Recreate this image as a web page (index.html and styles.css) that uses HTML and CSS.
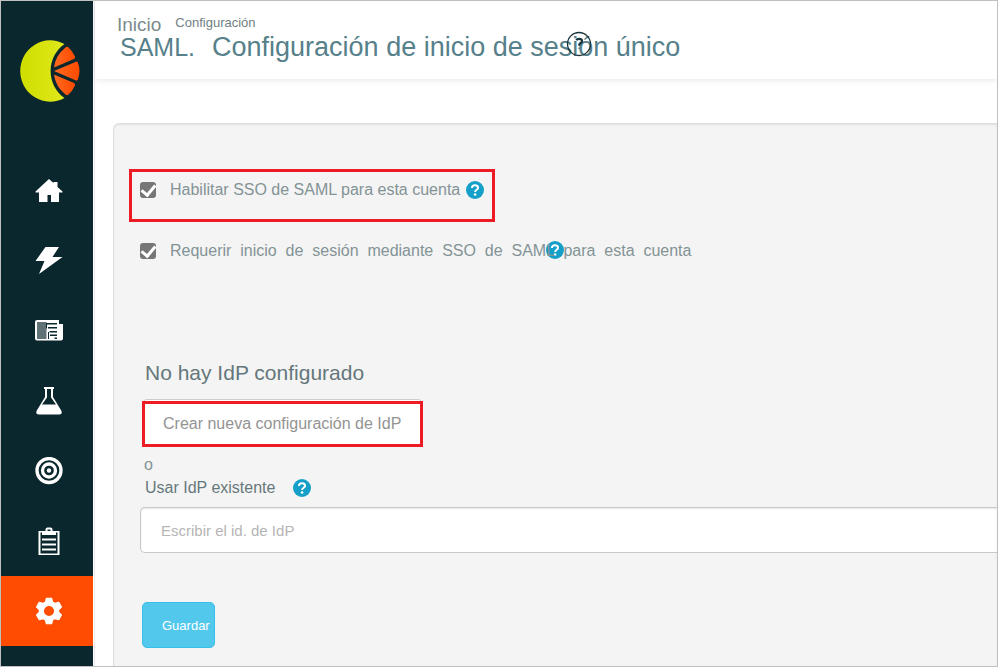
FILE: index.html
```html
<!DOCTYPE html>
<html lang="es">
<head>
<meta charset="utf-8">
<meta name="viewport" content="width=device-width, initial-scale=1">
<title>Configuración de inicio de sesión único</title>
<link rel="stylesheet" href="styles.css">
</head>
<body>
<svg class="defs" aria-hidden="true">
  <symbol id="help" viewBox="0 0 18 18">
    <circle cx="9" cy="9" r="9" fill="#169fc8"/>
    <path d="M6 6.900V6.500C6.200 4.900 7.400 4.200 9 4.200c1.800 0 3.100.9 3.100 2.500 0 2.200-3 2-3 4.300" fill="none" stroke="#fff" stroke-width="2"/>
    <circle cx="9.100" cy="13.500" r="1.300" fill="#fff"/>
  </symbol>
</svg>
<div class="app">
  <nav class="sidebar" aria-label="Principal">
    <a class="logo" href="#" aria-label="Portada">
      <svg width="60" height="62" viewBox="0 0 60 62">
        <defs>
          <linearGradient id="lime"><stop offset="0" stop-color="#cfdd00"/><stop offset="1" stop-color="#e0e81a"/></linearGradient>
          <linearGradient id="orange"><stop offset="0" stop-color="#ff6a20"/><stop offset="1" stop-color="#ff4a00"/></linearGradient>
        </defs>
        <path d="M44.500 4A30 30.700 0 1 0 44.500 58C26 45 26 17 44.500 4Z" fill="url(#lime)"/>
        <g fill="url(#orange)">
          <path d="M45.500 7.500Q47 6.300 48.300 7.300 52.500 11 55 16.500 55.500 18 54 19L34 27.500Q35.500 15.500 45.500 7.500Z"/>
          <path d="M34 31 56 21.700Q57.500 21.300 58 23 61 31 58 39 57.500 41 56 40.500Z"/>
          <path d="M45.500 54.500Q47 55.700 48.300 54.700 52.500 51 55 45.500 55.500 44 54 43L34 34.500Q35.500 46.500 45.500 54.500Z"/>
        </g>
      </svg>
    </a>
    <a class="item" href="#" aria-label="Inicio">
      <svg viewBox="0 1 28 28"><path fill="#fff" d="M14 3 18.500 7V6H22.500v5L27.500 15.500v1H24V26H16v-7H12.500v7H4V16.500H.5v-1Z"/></svg>
    </a>
    <a class="item" href="#" aria-label="Actividad">
      <svg viewBox="0 1 28 28"><path fill="#fff" d="M10.500 1H24L17.500 11H27.500L4 28 9.500 15H.5Z"/></svg>
    </a>
    <a class="item" href="#" aria-label="Noticias">
      <svg viewBox="0 1 28 28"><path fill="#fff" d="M2 4H24V8h4V22.500q0 2-2 2H2q-2 0-2-2V6Q0 4 2 4Z"/><path fill="#5f7377" d="M2 6H11.500V23H2Z"/><path fill="#0a272d" d="M11 7H22V8.500H11ZM13 11H22v1.500H13ZM11 8h1v4.500h-1ZM14.500 15h7.500v1.500h-7.500ZM13 16h1v7h-1ZM15 18.500h7V20h-7ZM19.500 21.500h2.500V23h-2.500Z"/></svg>
    </a>
    <a class="item" href="#" aria-label="Laboratorio">
      <svg viewBox="0 1 28 28"><path fill="#fff" fill-rule="evenodd" d="M9 1H19V3H18V11L26.500 25q1 3.500-2.500 3.500H4Q.5 28.500 1.500 25L10 11V3H9ZM12 3V11.500L7 18.500H21L16 11.500V3Z"/></svg>
    </a>
    <a class="item" href="#" aria-label="Objetivos">
      <svg viewBox="0 0 28 28"><g fill="none" stroke="#fff" stroke-width="3.300"><circle cx="14" cy="13.500" r="12"/><circle cx="14" cy="13.500" r="6.500"/></g><circle cx="14" cy="13.500" r="2.200" fill="#fff"/></svg>
    </a>
    <a class="item" href="#" aria-label="Informes">
      <svg viewBox="0 0 28 28"><path fill="#fff" fill-rule="evenodd" d="M10.500 4V2.500q0-2 2-2h3q2 0 2 2V4H24.500V28H3.500V4ZM12.500 2.500V4h3V2.500ZM5.500 5.500V26.500h17V5.500H21V8H7V5.500ZM7 11.500H21v2H7ZM7 16.500H21v2H7ZM7 21.500H21v2H7Z"/></svg>
    </a>
    <a class="item active" href="#" aria-label="Ajustes" aria-current="page">
      <svg viewBox="0 0 28 28"><path fill="#fff" stroke="#fff" stroke-width="1.500" stroke-linejoin="round" fill-rule="evenodd" d="M11.500 1.500h5l1 3.600 2.500 1.500 3.800-1 2.500 4.400-2.800 2.600v2.800l2.800 2.600-2.500 4.400-3.800-1-2.500 1.500-1 3.600h-5l-1-3.600-2.500-1.500-3.800 1L1.700 18l2.800-2.600v-2.800L1.700 10l2.500-4.400 3.800 1 2.500-1.500ZM14 8.200a5.800 5.800 0 1 0 0 11.600 5.800 5.800 0 0 0 0-11.600Z"/></svg>
    </a>
  </nav>
  <main class="main">
    <header class="header">
      <div class="crumbs"><a class="home" href="#">Inicio</a><a href="#">Configuración</a></div>
      <h1 class="title"><span class="saml">SAML.</span><span>Configuración de inicio de sesión único</span>
        <svg class="title-help" viewBox="0 0 26 26" role="img" aria-label="Ayuda"><circle cx="13" cy="13" r="11.500" fill="none" stroke="#17343b" stroke-width="1.300"/><path d="M10.300 9.300Q11 7.800 13 7.800q3 0 3 2.200 0 1.500-2 2.500-.8.600-.8 2.200" fill="none" stroke="#17343b" stroke-width="2.200"/><circle cx="13.200" cy="17.300" r="1" fill="#6f8488"/></svg>
      </h1>
    </header>
    <form class="panel">
      <div class="check marked">
        <input type="checkbox" id="enable" checked>
        <label for="enable">Habilitar SSO de SAML para esta cuenta</label>
        <svg class="help" role="img" aria-label="Ayuda"><use href="#help"/></svg>
      </div>
      <div class="check">
        <input type="checkbox" id="require" checked>
        <label for="require">Requerir  inicio  de  sesión  mediante  SSO  de  SAML  para  esta  cuenta</label>
        <svg class="help over" role="img" aria-label="Ayuda"><use href="#help"/></svg>
      </div>
      <section class="idp">
        <h2>No hay IdP configurado</h2>
        <button class="create" type="button">Crear nueva configuración de IdP</button>
        <p class="or">o</p>
        <div class="existing">
          <label for="idp">Usar IdP existente</label>
          <svg class="help" role="img" aria-label="Ayuda"><use href="#help"/></svg>
        </div>
        <input class="field" id="idp" type="text" placeholder="Escribir el id. de IdP">
        <button class="save" type="submit">Guardar</button>
      </section>
    </form>
  </main>
</div>
</body>
</html>
```

FILE: styles.css
```css
* { box-sizing: border-box; }

body {
  margin: 0;
  background: #fff;
  font-family: "Liberation Sans", Arial, sans-serif;
  font-size: 16px;
  color: #839396;
}

button, input { font-family: inherit; }
a { color: inherit; text-decoration: none; }
.defs { position: absolute; width: 0; height: 0; }

.app {
  display: flex;
  height: 100vh;
  border: 1px solid #c0c0c0;
  overflow: hidden;
}

.sidebar {
  flex: none;
  width: 92px;
  background: #0a272d;
}

.logo {
  display: block;
  height: 155px;
  padding: 39px 0 0 19px;
}

.item {
  display: flex;
  align-items: center;
  justify-content: center;
  height: 70px;
  padding-left: 4px;
}
.item svg { width: 28px; height: 28px; }
.active { background: #ff4c00; }

.main {
  flex: 1;
  min-width: 0;
  margin-left: 1px;
  border-left: 1px solid #ececf0;
}

.header {
  height: 78px;
  padding: 12px 0 0 22px;
  box-shadow: 0 1px 6px rgba(0, 0, 0, 0.1);
}
.crumbs {
  display: flex;
  gap: 14px;
  height: 18px;
  font-size: 13px;
  line-height: 20px;
  color: #6f8083;
}
.home { font-size: 19px; line-height: 24px; color: #7b8b8d; }

.title {
  position: relative;
  display: flex;
  align-items: baseline;
  gap: 17px;
  margin: 0;
  padding-left: 3px;
  font-size: 27px;
  line-height: 32px;
  font-weight: 400;
  color: #56808a;
  white-space: nowrap;
}
.saml { font-size: 25px; }
.title-help {
  position: absolute;
  left: 449px;
  top: 0;
  width: 26px;
  height: 26px;
}

.panel {
  min-height: 100vh;
  margin: 44px 0 0 18px;
  padding: 45px 0 0 15px;
  background: #f4f4f4;
  border: 1px solid #dedede;
  border-right: 0;
  border-radius: 6px 0 0 0;
  box-shadow: inset 0 1px 2px rgba(0, 0, 0, 0.08);
}

.check {
  position: relative;
  display: flex;
  align-items: center;
  width: fit-content;
  padding: 8px 12px 20px 11px;
}
.check input {
  appearance: none;
  width: 16px;
  height: 16px;
  margin: 0 14px 0 0;
  border-radius: 3px;
  background: #767676;
  display: grid;
  place-items: center;
}
.check input:checked::before {
  content: "";
  width: 6px;
  height: 11px;
  margin-bottom: 3px;
  border: solid #fff;
  border-width: 0 3px 3px 0;
  transform: rotate(40deg);
}
.marked {
  padding: 9px 8px 20px;
  margin-bottom: 12px;
  border: 3px solid #ed1c24;
}
.check label {
  position: relative;
  z-index: 1;
  line-height: 18px;
  white-space: pre;
}

.help { width: 18px; height: 18px; flex: none; }
.marked .help { margin-left: 6px; }
.over { position: absolute; left: 417px; top: 7px; }

.idp { margin: 81px 0 0 11px; }
.idp h2 {
  margin: 0 0 14px;
  padding-left: 5px;
  font-size: 21px;
  line-height: 24px;
  font-weight: 400;
  color: #64777a;
}
.create {
  position: relative;
  display: block;
  width: 281px;
  height: 48px;
  margin-left: 2px;
  padding: 2px 20px 0;
  background: #fff;
  border: 1px solid #ccc;
  border-radius: 5px;
  font-size: 16px;
  color: #939393;
  text-align: left;
  white-space: nowrap;
}
.create::after {
  content: "";
  position: absolute;
  inset: 1px -1px -1px;
  border: 3px solid #ed1c24;
}
.or {
  margin: 9px 0 4px;
  padding-left: 4px;
  line-height: 18px;
}
.existing {
  display: flex;
  align-items: center;
  gap: 18px;
  padding-left: 5px;
  line-height: 20px;
  color: #66787b;
}
.field {
  display: block;
  width: 100%;
  height: 46px;
  margin: 9px 0 49px;
  padding: 0 20px;
  background: #fff;
  border: 1px solid #c8c8c8;
  border-right: 0;
  border-radius: 5px 0 0 5px;
  box-shadow: inset 0 1px 2px rgba(0, 0, 0, 0.1);
  font-size: 15px;
}
.field::placeholder { color: #b5b5b5; opacity: 1; }
.save {
  display: block;
  height: 46px;
  margin-left: 2px;
  padding: 0 4px 0 19px;
  background: #52c8ed;
  border: 1px solid #35bfe9;
  border-radius: 5px;
  font-size: 13px;
  color: #fff;
}
```
